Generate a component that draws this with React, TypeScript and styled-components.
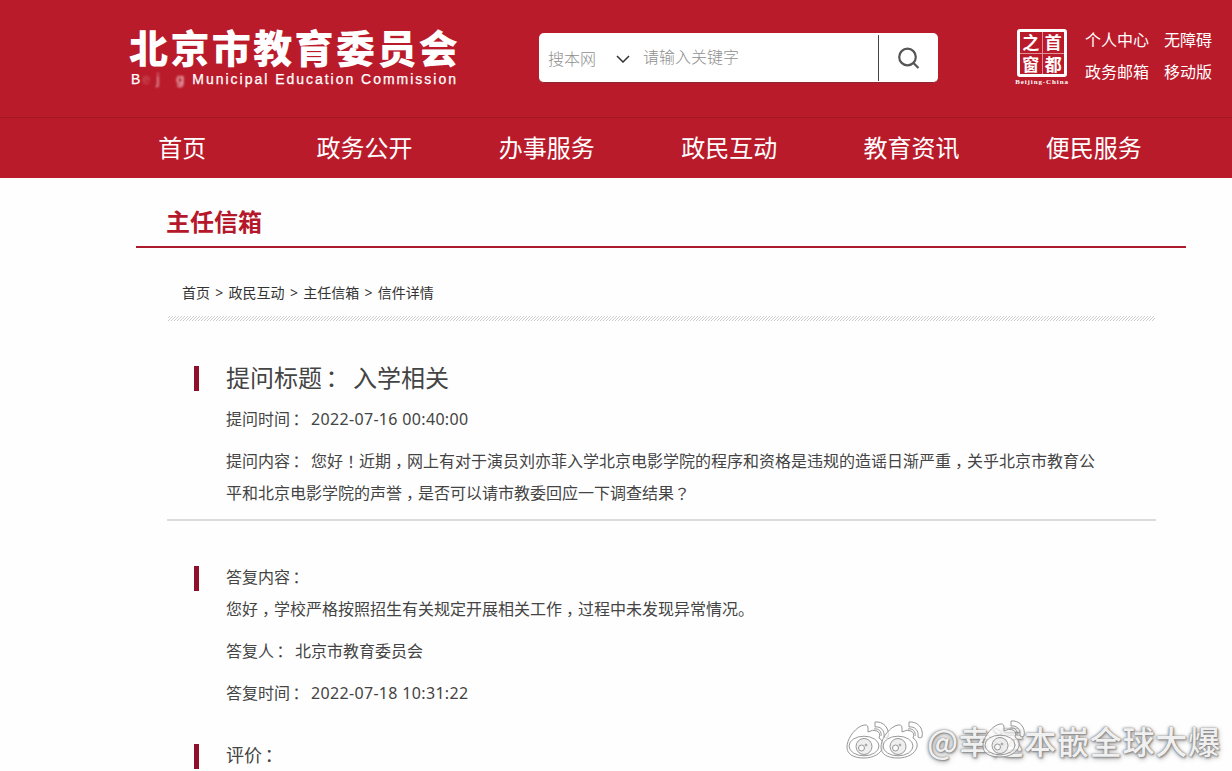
import React from 'react';
import styled, { createGlobalStyle } from 'styled-components';

const Global = createGlobalStyle`
  body { margin: 0; background: #fff; overflow: hidden; }
  * { box-sizing: border-box; }
`;
const Page = styled.div`
  position: relative;
  width: 1232px;
  height: 771px;
  overflow: hidden;
  background: #fefefe;
  color: #444;
  font-family: 'Noto Sans', 'Noto Sans CJK SC', sans-serif;
  font-size: 16px;
`;
const Header = styled.header`
  height: 118px;
  display: flex;
  align-items: flex-start;
  background: #ba1b2b;
  border-bottom: 1px solid #a51525;
  color: #fff;
`;
const Brand = styled.div`
  width: 409px;
  padding: 20px 0 0 129px;
  flex: none;
  white-space: nowrap;
`;
const BrandName = styled.div`
  font: 900 39px/52px 'Noto Sans CJK SC', sans-serif;
  letter-spacing: 2.4px;
`;
const BrandSub = styled.div`
  display: flex;
  align-items: baseline;
  font: 14px/16px 'Liberation Sans', sans-serif;
  letter-spacing: 1.98px;
  padding: 1px 0 0 2px;
  margin-top: -2px;
  -webkit-text-stroke: 0.25px #fff;
`;
const Faded = styled.span<{ $w: number; $o: number }>`
  flex: none;
  width: ${p => p.$w}px;
  opacity: ${p => p.$o};
  filter: blur(0.8px);
`;
const Search = styled.div`
  margin: 33px 0 0 130px;
  width: 399px;
  height: 50px;
  display: flex;
  align-items: center;
  background: #fff;
  border-radius: 5px;
  border-bottom: 1px solid #8c2630;
  color: #8f8f8f;
  font-size: 16px;
  font-weight: 300;
  line-height: 24px;
`;
const Scope = styled.div`
  width: 104px;
  padding: 2px 13px 0 9px;
  display: flex;
  align-items: center;
  justify-content: space-between;
  svg { display: block; }
`;
const Hint = styled.div`
  flex: 1;
  padding-bottom: 1px;
`;
const SearchButton = styled.div`
  width: 60px;
  height: 46px;
  border-left: 1px solid #444;
  display: flex;
  align-items: center;
  justify-content: center;
`;
const Seal = styled.div`
  margin: 29px 0 0 76px;
  width: 56px;
  display: flex;
  flex-direction: column;
  align-items: center;
  font: bold 7px/8px 'Liberation Serif', serif;
  letter-spacing: 0.9px;
  white-space: nowrap;
`;
const SealGrid = styled.div`
  width: 50px;
  height: 48px;
  display: grid;
  grid-template-columns: 1fr 1fr;
  gap: 1px;
  border: 3px solid #fff;
  border-radius: 3px;
  background: #e0909a;
  margin-bottom: 1px;
  font: 600 17px/20px 'Noto Sans CJK SC', sans-serif;
  letter-spacing: 0;
  span { background: #ba1b2b; text-align: center; }
`;
const Links = styled.div`
  margin: 24px 0 0 15px;
  display: grid;
  grid-template-columns: 79px 49px;
  line-height: 32px;
  white-space: nowrap;
`;
const Nav = styled.nav`
  height: 60px;
  padding: 0 47px 0 91px;
  display: grid;
  grid-template-columns: repeat(6, 1fr);
  background: #ba1b2b;
  color: #fff;
  font-size: 24px;
  line-height: 60px;
  text-align: center;
`;
const Heading = styled.h1`
  margin: 0 46px 0 136px;
  height: 70px;
  padding-left: 30px;
  border-bottom: 2px solid #ab1a2d;
  color: #b5182b;
  font-size: 24px;
  line-height: 87px;
  font-weight: 700;
`;
const Crumbs = styled.div`
  margin: 34px 0 0 182px;
  height: 22px;
  display: flex;
  gap: 5.3px;
  font-size: 14px;
  line-height: 22px;
  color: #333;
`;
const Hatch = styled.div`
  margin: 12px 77px 0 168px;
  height: 5px;
  background: repeating-linear-gradient(135deg, #fefefe 0 1.3px, #cfcfcf 1.3px 2.12px);
`;
const Section = styled.section<{ $top: number }>`
  display: flex;
  align-items: flex-start;
  padding-left: 194px;
  margin-top: ${p => p.$top}px;
`;
const Bar = styled.div<{ $top: number }>`
  width: 5px;
  height: 25px;
  margin: ${p => p.$top}px 27px 0 0;
  background: #8e1029;
`;
const Line = styled.div<{ $size?: number; $gap?: number }>`
  height: 32px;
  font-size: ${p => p.$size || 16}px;
  line-height: 34px;
  margin-top: ${p => p.$gap || 0}px;
  white-space: nowrap;
`;
const Centered = styled.span`
  display: inline-block;
  width: 1em;
  text-align: center;
  font-family: 'Noto Sans CJK TC', sans-serif;
  text-spacing-trim: space-all;
  line-height: 1;
  vertical-align: -1px;
`;
const Colon = styled(Centered)`
  text-indent: -0.2em;
`;
const Comma = styled.span`
  display: inline-block;
  width: 1em;
  text-indent: 0.25em;
  text-spacing-trim: space-all;
`;
const Value = styled.span<{ $gap?: number }>`
  margin-left: ${p => p.$gap ?? 5}px;
`;
const Stamp = styled(Value)`
  letter-spacing: 0.33px;
`;
const Divider = styled.div`
  margin: 11px 76px 0 167px;
  height: 2px;
  background: #dcdcdc;
`;
const Watermark = styled.div`
  position: absolute;
  left: 846px;
  top: 717px;
  display: flex;
  align-items: center;
  white-space: nowrap;
`;
const Handle = styled.div`
  margin: 0 0 0 3px;
  font: 500 32px/46px 'Noto Sans CJK SC', sans-serif;
  letter-spacing: 0.75px;
  color: #f0f0f0;
  text-shadow: 0 0 1px #777, 1px 1px 2px #888, -1px 0 3px #aaa, 1px 2px 5px #aaa;
`;
const ExtraEye = styled.div`
  position: absolute;
  left: 136px;
  top: 0;
`;

function Txt({ children }: { children: string }) {
  return (
    <>
      {children.split(/([：，！？])/).map((part, i) =>
        part === '，' ? <Comma key={i}>{part}</Comma>
          : part === '：' ? <Colon key={i}>{part}</Colon>
          : /^[！？]$/.test(part) ? <Centered key={i}>{part}</Centered>
          : part,
      )}
    </>
  );
}

function Eye() {
  return (
    <g fill="#fff" fillOpacity="0.6" stroke="#8c8c8c" strokeWidth="0.9">
      <path d="M1 29C1 22 7 12 15 8q7-3 7 2v4q5-3 9-1q4 2 2 7q5 3 4 9c-2 7-10 11-19 11C7 40 1 36 1 29Z" />
      <path d="M29 4c8-1 15 6 13 15q-2 2-4 0c1-6-3-11-9-10Z" />
      <path d="M28 11c5-1 8 3 7 7" fill="none" />
      <ellipse cx="18" cy="28" rx="15" ry="9.8" />
      <circle cx="18" cy="28.500" r="8" fill="#e4e4e4" />
      <circle cx="15.500" cy="30" r="3" />
      <circle cx="20" cy="27" r="0.9" />
    </g>
  );
}

const nav = ['首页', '政务公开', '办事服务', '政民互动', '教育资讯', '便民服务'];
const crumbs = ['首页', '>', '政民互动', '>', '主任信箱', '>', '信件详情'];

export default function App() {
  return (
    <Page>
      <Global />
      <Header>
        <Brand>
          <BrandName>北京市教育委员会</BrandName>
          <BrandSub>
            <span>B</span>
            <Faded $w={14} $o={0.2}>e</Faded>
            <Faded $w={20} $o={0.6}>j</Faded>
            <Faded $w={16} $o={0.7}>g</Faded>
            <span>Municipal Education Commission</span>
          </BrandSub>
        </Brand>
        <Search>
          <Scope>
            搜本网
            <svg width="14" height="8" viewBox="0 0 14 8" fill="none" stroke="#333" strokeWidth="1.5">
              <path d="M1 1l6 6 6-6" />
            </svg>
          </Scope>
          <Hint>请输入关键字</Hint>
          <SearchButton>
            <svg width="22" height="22" viewBox="0 0 22 22" fill="none" stroke="#555" strokeWidth="2.2">
              <circle cx="9.500" cy="10" r="8.300" />
              <path d="M15.500 16l5 5" />
            </svg>
          </SearchButton>
        </Search>
        <Seal>
          <SealGrid><span>之</span><span>首</span><span>窗</span><span>都</span></SealGrid>
          Beijing-China
        </Seal>
        <Links>
          <span>个人中心</span><span>无障碍</span>
          <span>政务邮箱</span><span>移动版</span>
        </Links>
      </Header>
      <Nav>{nav.map(n => <span key={n}>{n}</span>)}</Nav>
      <Heading>主任信箱</Heading>
      <Crumbs>{crumbs.map((c, i) => <span key={i}>{c}</span>)}</Crumbs>
      <Hatch />
      <Section $top={40}>
        <Bar $top={5} />
        <div>
          <Line $size={24}><Txt>提问标题：</Txt><Value $gap={7}>入学相关</Value></Line>
          <Line $gap={9}><Txt>提问时间：</Txt><Stamp>2022-07-16 00:40:00</Stamp></Line>
          <Line $gap={10}><Txt>提问内容：</Txt><Value><Txt>您好！近期，网上有对于演员刘亦菲入学北京电影学院的程序和资格是违规的造谣日渐严重，关乎北京市教育公</Txt></Value></Line>
          <Line><Txt>平和北京电影学院的声誉，是否可以请市教委回应一下调查结果？</Txt></Line>
        </div>
      </Section>
      <Divider />
      <Section $top={39}>
        <Bar $top={6} />
        <div>
          <Line><Txt>答复内容：</Txt></Line>
          <Line><Txt>您好，学校严格按照招生有关规定开展相关工作，过程中未发现异常情况。</Txt></Line>
          <Line $gap={10}><Txt>答复人：</Txt><Value>北京市教育委员会</Value></Line>
          <Line $gap={10}><Txt>答复时间：</Txt><Stamp>2022-07-18 10:31:22</Stamp></Line>
        </div>
      </Section>
      <Section $top={30}>
        <Bar $top={6} />
        <Line $size={18}><Txt>评价：</Txt></Line>
      </Section>
      <Watermark>
        <svg width="78" height="44" viewBox="0 0 78 44">
          <Eye />
          <g transform="translate(34 0)"><Eye /></g>
        </svg>
        <Handle>@幸运本嵌全球大爆</Handle>
        <ExtraEye>
          <svg width="46" height="44" viewBox="0 0 46 44"><Eye /></svg>
        </ExtraEye>
      </Watermark>
    </Page>
  );
}
